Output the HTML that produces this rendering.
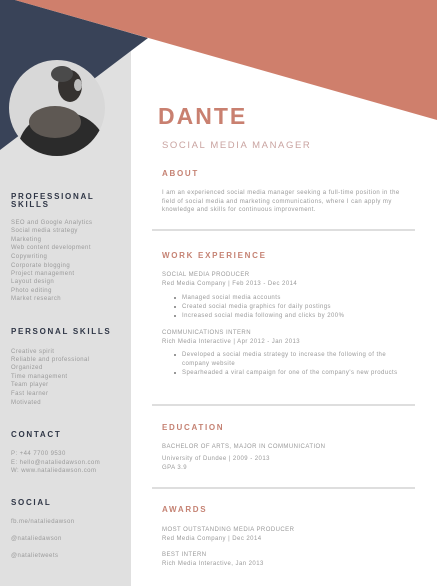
<!DOCTYPE html>
<html><head><meta charset="utf-8"><style>
*{margin:0;padding:0;box-sizing:border-box}
body{width:437px;height:586px;position:relative;overflow:hidden;background:#fff;font-family:"Liberation Sans",sans-serif}
.t{position:absolute;white-space:nowrap;line-height:10px;font-size:6px;letter-spacing:0.45px;color:#9a9a9a}
.h{font-weight:bold;font-size:8px;letter-spacing:1.7px;color:#2f3646}
.r{font-weight:bold;font-size:8px;letter-spacing:1.7px;color:#c58273}
.hr{position:absolute;left:152px;width:263px;height:2px;background:#dedede}
.dot{position:absolute;width:2.4px;height:2.4px;border-radius:50%;background:#777}
</style></head><body>
<div style="position:absolute;left:0;top:0;width:131px;height:586px;background:#e0e0e0"></div>
<svg style="position:absolute;left:0;top:0" width="437" height="586">
<polygon points="0,0 15,0 148,38 0,150" fill="#394358"/>
<polygon points="15,0 437,0 437,120" fill="#cf7f6c"/>
<defs><clipPath id="c"><circle cx="57" cy="108" r="48"/></clipPath></defs>
<circle cx="57" cy="108" r="48" fill="#d8d8d8"/>
<g clip-path="url(#c)">
<ellipse cx="62" cy="150" rx="44" ry="38" fill="#2b2b2b"/>
<ellipse cx="55" cy="122" rx="26" ry="16" fill="#5e5853"/>
<ellipse cx="70" cy="86" rx="12" ry="16" fill="#353230"/>
<ellipse cx="62" cy="74" rx="11" ry="8" fill="#4a4a4a"/>
<ellipse cx="78" cy="85" rx="4" ry="6" fill="#bdbdbd"/>
</g>
</svg>
<div class="t h" style="left:11px;top:192px">PROFESSIONAL</div>
<div class="t h" style="left:11px;top:200px">SKILLS</div>
<div class="t" style="left:11px;top:218px">SEO and Google Analytics</div>
<div class="t" style="left:11px;top:226px">Social media strategy</div>
<div class="t" style="left:11px;top:235px">Marketing</div>
<div class="t" style="left:11px;top:243px">Web content development</div>
<div class="t" style="left:11px;top:252px">Copywriting</div>
<div class="t" style="left:11px;top:261px">Corporate blogging</div>
<div class="t" style="left:11px;top:269px">Project management</div>
<div class="t" style="left:11px;top:277px">Layout design</div>
<div class="t" style="left:11px;top:286px">Photo editing</div>
<div class="t" style="left:11px;top:294px">Market research</div>
<div class="t h" style="left:11px;top:327px">PERSONAL SKILLS</div>
<div class="t" style="left:11px;top:347px">Creative spirit</div>
<div class="t" style="left:11px;top:355px">Reliable and professional</div>
<div class="t" style="left:11px;top:363px">Organized</div>
<div class="t" style="left:11px;top:372px">Time management</div>
<div class="t" style="left:11px;top:380px">Team player</div>
<div class="t" style="left:11px;top:389px">Fast learner</div>
<div class="t" style="left:11px;top:398px">Motivated</div>
<div class="t h" style="left:11px;top:430px">CONTACT</div>
<div class="t" style="left:11px;top:449px">P: +44 7700 9530</div>
<div class="t" style="left:11px;top:458px">E: hello@nataliedawson.com</div>
<div class="t" style="left:11px;top:466px">W: www.nataliedawson.com</div>
<div class="t h" style="left:11px;top:498px">SOCIAL</div>
<div class="t" style="left:11px;top:517px">fb.me/nataliedawson</div>
<div class="t" style="left:11px;top:534px">@nataliedawson</div>
<div class="t" style="left:11px;top:551px">@natalietweets</div>

<div class="t" style="left:158px;top:102px;line-height:28px;font-size:23px;font-weight:bold;letter-spacing:2px;color:#c98070">DANTE</div>
<div class="t" style="left:162px;top:140px;line-height:12px;font-size:9.5px;letter-spacing:1.6px;color:#c9a3a0">SOCIAL MEDIA MANAGER</div>
<div class="t r" style="left:162px;top:169px">ABOUT</div>
<div class="t" style="left:162px;top:188px">I am an experienced social media manager seeking a full-time position in the</div>
<div class="t" style="left:162px;top:197px">field of social media and marketing communications, where I can apply my</div>
<div class="t" style="left:162px;top:205px">knowledge and skills for continuous improvement.</div>
<div class="hr" style="top:229px"></div>
<div class="t r" style="left:162px;top:251px">WORK EXPERIENCE</div>
<div class="t" style="left:162px;top:270px">SOCIAL MEDIA PRODUCER</div>
<div class="t" style="left:162px;top:279px">Red Media Company | Feb 2013 - Dec 2014</div>
<div class="dot" style="left:174px;top:297px"></div><div class="t" style="left:182px;top:293px">Managed social media accounts</div>
<div class="dot" style="left:174px;top:306px"></div><div class="t" style="left:182px;top:302px">Created social media graphics for daily postings</div>
<div class="dot" style="left:174px;top:315px"></div><div class="t" style="left:182px;top:311px">Increased social media following and clicks by 200%</div>
<div class="t" style="left:162px;top:328px">COMMUNICATIONS INTERN</div>
<div class="t" style="left:162px;top:337px">Rich Media Interactive | Apr 2012 - Jan 2013</div>
<div class="dot" style="left:174px;top:354px"></div><div class="t" style="left:182px;top:350px">Developed a social media strategy to increase the following of the</div>
<div class="t" style="left:182px;top:359px">company website</div>
<div class="dot" style="left:174px;top:372px"></div><div class="t" style="left:182px;top:368px">Spearheaded a viral campaign for one of the company's new products</div>
<div class="hr" style="top:404px"></div>
<div class="t r" style="left:162px;top:423px">EDUCATION</div>
<div class="t" style="left:162px;top:442px">BACHELOR OF ARTS, MAJOR IN COMMUNICATION</div>
<div class="t" style="left:162px;top:454px">University of Dundee | 2009 - 2013</div>
<div class="t" style="left:162px;top:463px">GPA 3.9</div>
<div class="hr" style="top:487px"></div>
<div class="t r" style="left:162px;top:505px">AWARDS</div>
<div class="t" style="left:162px;top:525px">MOST OUTSTANDING MEDIA PRODUCER</div>
<div class="t" style="left:162px;top:534px">Red Media Company | Dec 2014</div>
<div class="t" style="left:162px;top:550px">BEST INTERN</div>
<div class="t" style="left:162px;top:559px">Rich Media Interactive, Jan 2013</div>
</body></html>
